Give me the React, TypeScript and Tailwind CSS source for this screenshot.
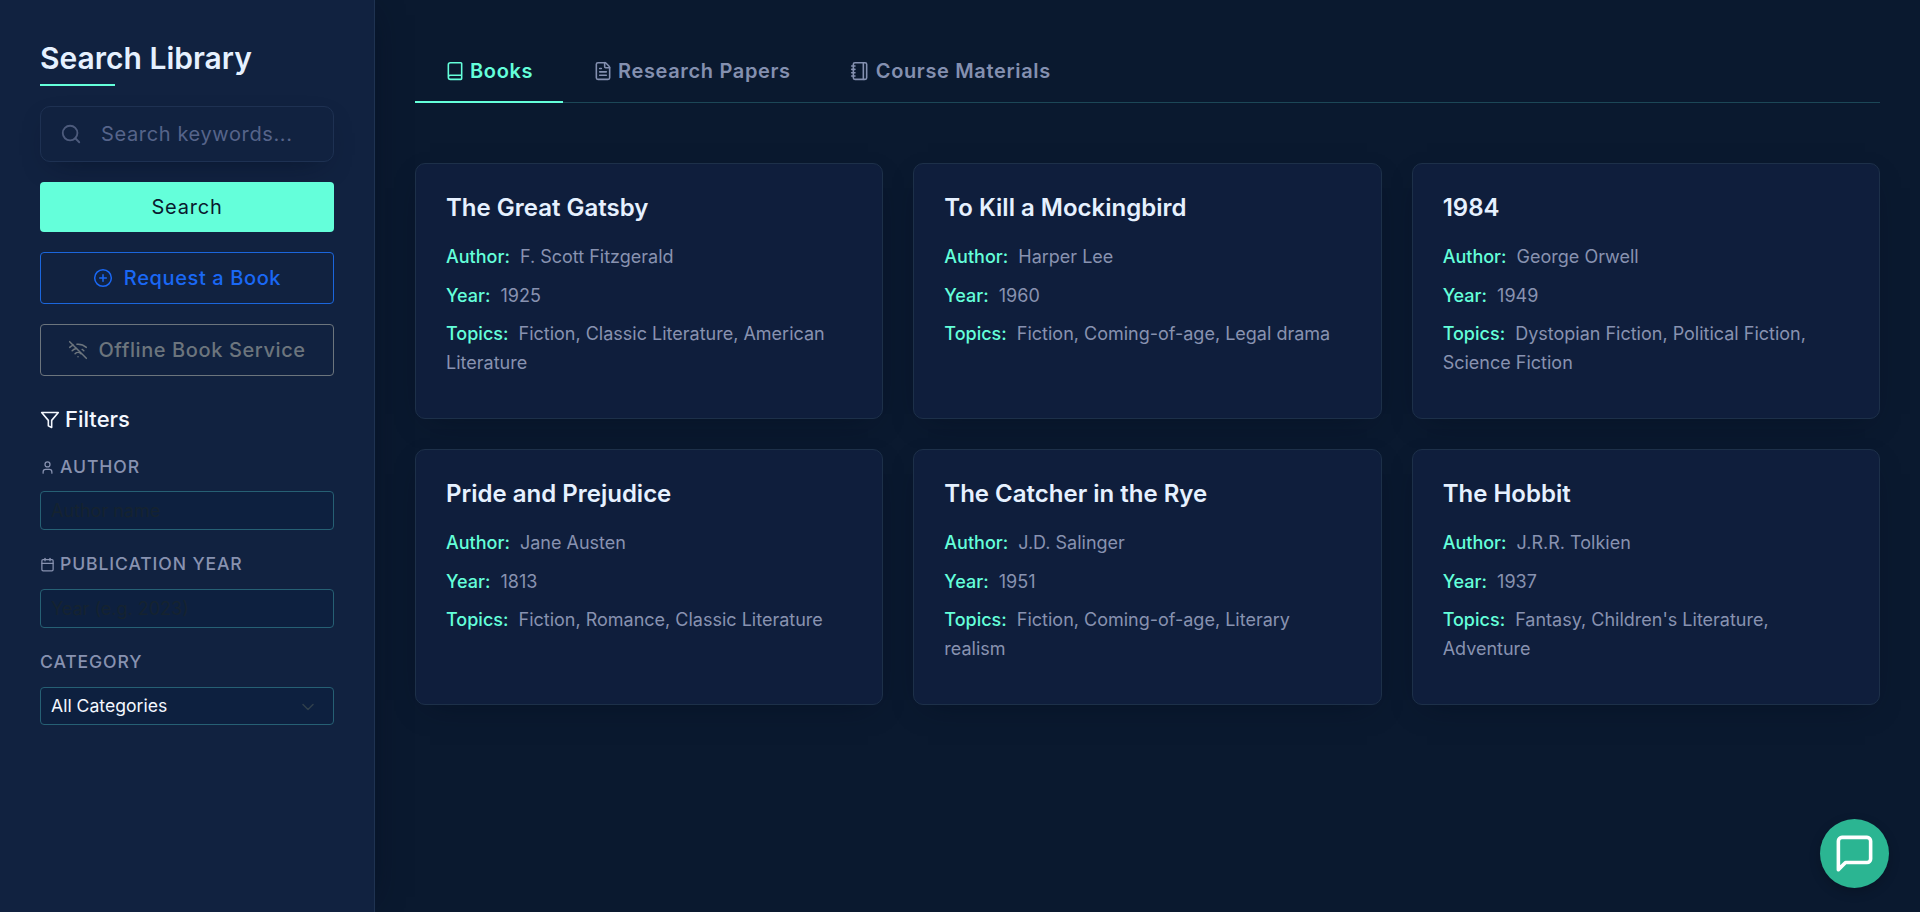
import React from "react";
import { Book, Calendar, CirclePlus, FileText, Notebook, Search, User, WifiOff, ChevronDown } from "lucide-react";

const books = [
  { title: "The Great Gatsby", author: "F. Scott Fitzgerald", year: "1925", topics: "Fiction, Classic Literature, American Literature" },
  { title: "To Kill a Mockingbird", author: "Harper Lee", year: "1960", topics: "Fiction, Coming-of-age, Legal drama" },
  { title: "1984", author: "George Orwell", year: "1949", topics: "Dystopian Fiction, Political Fiction, Science Fiction" },
  { title: "Pride and Prejudice", author: "Jane Austen", year: "1813", topics: "Fiction, Romance, Classic Literature" },
  { title: "The Catcher in the Rye", author: "J.D. Salinger", year: "1951", topics: "Fiction, Coming-of-age, Literary realism" },
  { title: "The Hobbit", author: "J.R.R. Tolkien", year: "1937", topics: "Fantasy, Children's Literature, Adventure" },
];

function Field({ label, value }: { label: string; value: string }) {
  return (
    <p className="mb-[9.8px] text-[18px] leading-[28.8px] text-[#8892b0]">
      <span className="mr-[5px] font-medium text-[#64ffda]">{label}:</span> {value}
    </p>
  );
}

function Sidebar() {
  return (
    <aside className="z-10 flex w-[375px] shrink-0 flex-col border-r border-[#1f3351] bg-[#112240] px-10 pt-10 shadow-[10px_0_30px_-15px_rgba(2,12,27,0.5)]">
      <h1 className="h-[46px] text-[30px] font-semibold leading-[37px] text-[#e6f1ff]">Search Library</h1>
      <div className="-mt-[2px] h-[2px] w-[75px] bg-[#64ffda]" />
      <div className="mt-5 flex h-14 items-center rounded-[10px] border border-[#1e3152] pl-[19px] shadow-[0_10px_30px_-15px_rgba(2,12,27,0.7)]">
        <Search size={22} strokeWidth={2} className="text-[#4d5b7c]" />
        <input
          placeholder="Search keywords..."
          className="ml-[19px] w-[215px] bg-transparent text-[20px] tracking-[0.63px] outline-none placeholder:text-[#56648a]"
        />
      </div>
      <button className="mt-5 h-[50px] rounded-[4px] bg-[#64ffda] text-[20px] tracking-[0.8px] text-[#0a192f]">Search</button>
      <button className="mt-5 flex h-[52px] items-center justify-center gap-[11px] rounded-[4px] border border-[#1b66dc] text-[20px] font-medium tracking-[0.62px] text-[#1a68f5]">
        <CirclePlus size={20} strokeWidth={1.8} />
        Request a Book
      </button>
      <button className="mt-5 flex h-[52px] items-center justify-center gap-[10px] rounded-[4px] border border-[#6c757d] text-[20px] font-medium tracking-[0.6px] text-[#6c757d]">
        <WifiOff size={20} strokeWidth={1.8} />
        Offline Book Service
      </button>
      <h2 className="mt-[30px] flex h-[27px] items-center gap-[5px] text-[22px] font-medium text-[#f4f8ff]">
        <svg width="20" height="20" viewBox="0 0 24 24" fill="none" stroke="currentColor" strokeWidth="1.9" strokeLinejoin="round">
          <path d="M22 3H2l8 9.46V19l4 2v-8.54z" />
        </svg>
        Filters
      </h2>
      <label className="mt-[21px] flex h-[26px] items-center gap-[5px] text-[17.6px] font-medium tracking-[0.88px] text-[#8892b0]">
        <User size={15} strokeWidth={2} className="mt-px" />
        AUTHOR
      </label>
      <input placeholder="Author name" className="mt-[11px] h-[39px] rounded-[4px] border border-[#266074] bg-[#0d203f] px-[10px] text-[18px] outline-none placeholder:text-[#152330]" />
      <label className="mt-[21px] flex h-[26px] items-center gap-[5px] text-[17.6px] font-medium tracking-[0.88px] text-[#8892b0]">
        <Calendar size={15} strokeWidth={2} className="mt-px" />
        PUBLICATION YEAR
      </label>
      <input placeholder="Year (e.g. 2023)" className="mt-[12px] h-[39px] rounded-[4px] border border-[#266074] bg-[#0d203f] px-[10px] text-[18px] outline-none placeholder:text-[#152330]" />
      <label className="mt-[21px] flex h-[26px] items-center text-[17.6px] font-medium tracking-[0.88px] text-[#8892b0]">CATEGORY</label>
      <div className="mt-[12px] flex h-[38px] items-center justify-between rounded-[4px] border border-[#266074] bg-[#0d203f] pl-[10px] pr-[15px] pt-px text-[17.6px] text-[#f4f8ff]">
        All Categories
        <ChevronDown size={20} strokeWidth={1.8} className="text-[#2f3f4c]" />
      </div>
    </aside>
  );
}

export default function App() {
  return (
    <div className="flex h-[912px] w-full overflow-hidden bg-[#0a192f] font-['Inter',sans-serif]">
      <Sidebar />
      <main className="min-w-0 flex-1 px-10 pt-10">
        <nav className="flex h-[63px] border-b border-[#1c4757] text-[20px] font-semibold tracking-[0.65px] text-[#8490b0]">
          <div className="flex h-[63px] w-[148px] items-center gap-[5px] border-b-2 border-[#64ffda] pl-[30px] text-[#64ffda]">
            <Book size={20} strokeWidth={1.9} className="shrink-0" />
            Books
          </div>
          <div className="flex h-[61px] items-center gap-[5px] pl-[30px] pr-[30px]">
            <FileText size={20} strokeWidth={1.9} />
            Research Papers
          </div>
          <div className="flex h-[61px] items-center gap-[6px] pl-[29px]">
            <Notebook size={20} strokeWidth={1.9} />
            Course Materials
          </div>
        </nav>
        <section className="mt-[60px] grid grid-cols-3 gap-[30px]">
          {books.map((b) => (
            <article key={b.title} className="h-[256px] rounded-[10px] border border-[#1d3049] bg-[#0f1e3c] px-[30px] pt-[28px] shadow-[0_10px_30px_-15px_rgba(2,12,27,0.6)]">
              <h3 className="mb-[19.2px] text-[24px] font-semibold leading-[32px] text-[#e6f1ff]">{b.title}</h3>
              <Field label="Author" value={b.author} />
              <Field label="Year" value={b.year} />
              <Field label="Topics" value={b.topics} />
            </article>
          ))}
        </section>
      </main>
      <button className="absolute bottom-[24px] right-[31px] z-20 flex size-[69px] items-center justify-center rounded-full bg-[#2bb592] text-white shadow-[0_4px_12px_rgba(0,0,0,0.2)]">
        <svg width="43" height="43" viewBox="0 0 24 24" fill="none" stroke="currentColor" strokeWidth="2" strokeLinecap="round" strokeLinejoin="round">
          <path d="M21 15a2 2 0 0 1-2 2H7l-4 4V5a2 2 0 0 1 2-2h14a2 2 0 0 1 2 2z" />
        </svg>
      </button>
    </div>
  );
}
